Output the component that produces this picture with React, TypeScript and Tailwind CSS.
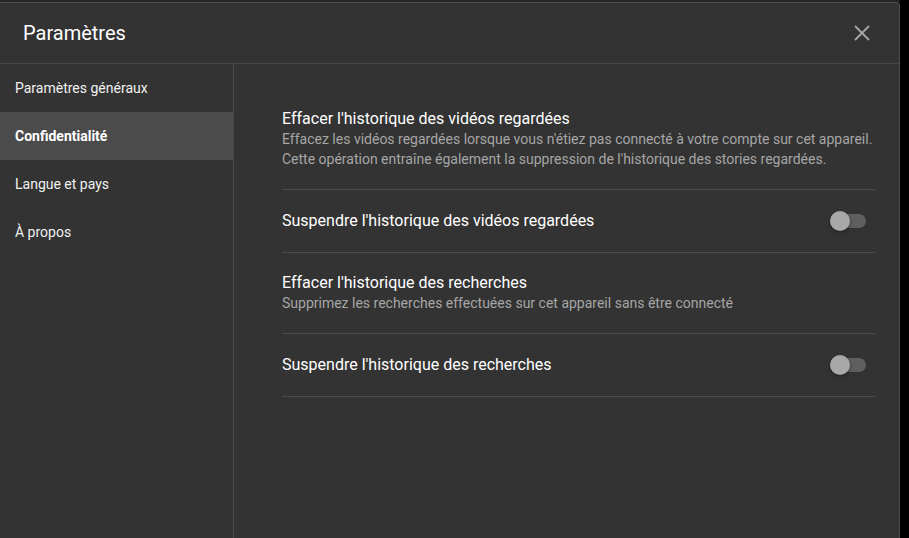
import React from 'react'

const NAV = ['Paramètres généraux', 'Confidentialité', 'Langue et pays', 'À propos']

function Toggle() {
  return (
    <div className="relative w-[36px] h-[20px] mr-[9px] shrink-0">
      <div className="absolute left-0 top-[3px] w-[36px] h-[14px] rounded-full bg-[#5f5f5f]" />
      <div className="absolute left-0 top-0 w-[20px] h-[20px] rounded-full bg-[#a9a9a9] shadow-[0_1px_3px_rgba(0,0,0,0.5)]" />
    </div>
  )
}

export default function App() {
  return (
    <div
      className="w-[909px] h-[538px] overflow-hidden bg-black text-white"
      style={{ fontFamily: 'Roboto, "Noto Sans", sans-serif' }}
    >
      {/* sliver of the page behind the dialog */}
      <div className="h-[2px] w-[900px] bg-[#262626]" />

      <div className="w-[900px] h-[536px] bg-[#333333] border-t border-r border-[#505050] rounded-tr-[4px] flex flex-col">
        {/* header */}
        <div className="h-[61px] flex items-center justify-between pl-[23px] pr-[28px] border-b border-[#474747] shrink-0">
          <h1 className="text-[20px] leading-[24px] text-white">Paramètres</h1>
          <svg width="18" height="18" viewBox="0 0 18 18" className="text-[#a8a8a8]">
            <path d="M2 2 L16 16 M16 2 L2 16" stroke="currentColor" strokeWidth="1.8" />
          </svg>
        </div>

        <div className="flex flex-1 min-h-0">
          {/* sidebar */}
          <nav className="w-[234px] shrink-0 border-r border-[#4a4a4a]">
            {NAV.map((label) => {
              const active = label === 'Confidentialité'
              return (
                <div
                  key={label}
                  className={
                    active
                      ? 'h-[48px] flex items-center pl-[15px] text-[14px] font-bold bg-[#4b4b4b] text-white'
                      : 'h-[48px] flex items-center pl-[15px] text-[14px] text-[#f1f1f1]'
                  }
                >
                  {label}
                </div>
              )
            })}
          </nav>

          {/* content */}
          <main className="flex-1 pt-[25px] pl-[48px] pr-[24px]">
            <div className="py-[20px] border-b border-[#4a4a4a]">
              <div className="text-[16px] leading-[20px] text-white">Effacer l'historique des vidéos regardées</div>
              <div className="text-[14px] leading-[20px] text-[#a6a6a6]">
                Effacez les vidéos regardées lorsque vous n'étiez pas connecté à votre compte sur cet appareil.
                <br />
                Cette opération entraîne également la suppression de l'historique des stories regardées.
              </div>
            </div>

            <div className="h-[63px] flex items-center justify-between border-b border-[#4a4a4a]">
              <div className="text-[16px] leading-[20px] text-white">Suspendre l'historique des vidéos regardées</div>
              <Toggle />
            </div>

            <div className="py-[20px] border-b border-[#4a4a4a]">
              <div className="text-[16px] leading-[20px] text-white">Effacer l'historique des recherches</div>
              <div className="text-[14px] leading-[20px] text-[#a6a6a6]">
                Supprimez les recherches effectuées sur cet appareil sans être connecté
              </div>
            </div>

            <div className="h-[63px] flex items-center justify-between border-b border-[#4a4a4a]">
              <div className="text-[16px] leading-[20px] text-white">Suspendre l'historique des recherches</div>
              <Toggle />
            </div>
          </main>
        </div>
      </div>
    </div>
  )
}
